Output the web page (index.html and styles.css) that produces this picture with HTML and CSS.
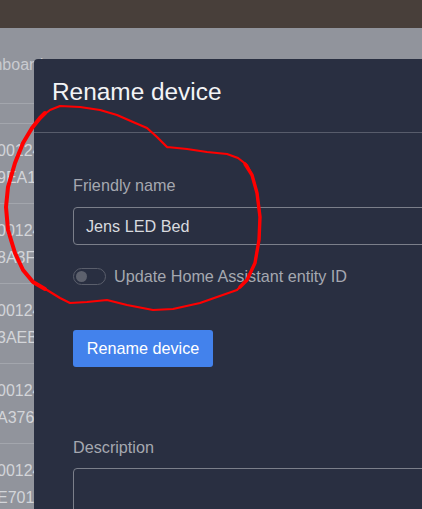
FILE: index.html
```html
<!DOCTYPE html>
<html lang="en">
<head>
<meta charset="utf-8">
<title>Rename device</title>
<link rel="stylesheet" href="styles.css">
</head>
<body>
<div class="topbar"></div>
<div class="page">
  <div class="crumb">Dashboard</div>
  <div class="table">
    <div class="thead"></div>
    <div class="row"><span>00124b0018</span><span>9EA1C2</span></div>
    <div class="row"><span>00124b0018</span><span>8A3F11</span></div>
    <div class="row"><span>00124b0018</span><span>3AEB07</span></div>
    <div class="row"><span>00124b0018</span><span>A376D4</span></div>
    <div class="row"><span>00124b0018</span><span>E701F9</span></div>
  </div>
</div>

<div class="modal">
  <div class="modal-header">
    <h1 class="modal-title">Rename device</h1>
  </div>
  <div class="modal-body">
    <label class="field-label">Friendly name</label>
    <div class="input">Jens LED Bed</div>
    <div class="toggle-row">
      <span class="toggle"><span class="knob"></span></span>
      <span class="toggle-label">Update Home Assistant entity ID</span>
    </div>
    <button class="btn">Rename device</button>
    <label class="field-label desc-label">Description</label>
    <div class="textarea"></div>
  </div>
</div>

<svg class="annotation" width="422" height="509" viewBox="0 0 422 509">
  <path class="ink" d="M167 147 L157 137 L147 128 L133 122 L117 115 L100 110 L80 107 L60 106 L50 110 L40 118 L32 128 L23 143 L15 163 L8 187 L6 207 L8 230 L15 253 L23 270 L33 282 L47 290 L60 298 L70 303 L87 302 L107 300 L127 305 L153 310 L173 309 L200 303 L217 297 L237 290 L247 280 L255 263 L259 240 L260 217 L257 193 L252 175 L247 165 L238 158 L227 154 L207 152 L187 149 L167 147"/>
  <path class="ink thick" d="M45 113 L40 118 L32 128 L23 143 L15 163 L8 187 L6 207 L8 230 L15 253 L23 270 L33 282 L45 289"/>
  <path class="ink mid" d="M245 164 L252 175 L257 193 L260 217 L259 240 L255 263 L247 280 L240 287"/>
</svg>
</body>
</html>
```

FILE: styles.css
```css
html, body {
  margin: 0;
  padding: 0;
}
body {
  width: 422px;
  height: 509px;
  overflow: hidden;
  position: relative;
  background: #91949c;
  font-family: "Liberation Sans", Arial, sans-serif;
}
.topbar {
  height: 28px;
  background: #483f3a;
}
.page {
  background: #91949c;
}
.crumb {
  font-size: 16px;
  line-height: 20px;
  color: #c9cbd0;
  margin-left: -35px;
  padding-top: 27px;
  height: 20px;
  white-space: nowrap;
}
.table {
  margin-top: 28px;
}
.thead {
  height: 19px;
  border-top: 1px solid #a3a6ad;
  border-bottom: 1px solid #a3a6ad;
}
.row {
  height: 80px;
  border-bottom: 1px solid #a3a6ad;
  display: flex;
  flex-direction: column;
  padding-top: 13px;
  box-sizing: border-box;
  font-size: 16px;
  line-height: 27px;
  color: #d3d5d9;
  margin-left: -3px;
  white-space: nowrap;
}
.modal {
  position: absolute;
  left: 34px;
  top: 59px;
  width: 520px;
  height: 600px;
  background: #292f41;
  border-radius: 4px;
}
.modal-header {
  padding: 19px 18px 26px;
  border-bottom: 1px solid #575c6b;
}
.modal-title {
  margin: 0;
  font-size: 24.4px;
  line-height: 28px;
  font-weight: normal;
  color: #f3f4f6;
}
.modal-body {
  padding: 42px 39px 0;
  display: flex;
  flex-direction: column;
  align-items: flex-start;
  font-size: 16.2px;
}
.field-label {
  font-size: 16.2px;
  line-height: 20px;
  color: #a5a8b0;
}
.input {
  margin-top: 12px;
  align-self: stretch;
  height: 36px;
  line-height: 36px;
  border: 1px solid #7b7f8a;
  border-radius: 4px;
  padding-left: 12px;
  font-size: 16.2px;
  color: #d8dadf;
}
.toggle-row {
  margin-top: 22px;
  display: flex;
  align-items: center;
  gap: 8px;
  height: 18px;
}
.toggle {
  width: 29px;
  height: 15px;
  border: 1px solid #5a5e6b;
  border-radius: 9px;
  display: flex;
  align-items: center;
  padding-left: 2px;
  box-sizing: content-box;
}
.knob {
  width: 11px;
  height: 11px;
  border-radius: 50%;
  background: #5d616d;
}
.toggle-label {
  font-size: 16.2px;
  line-height: 20px;
  color: #a5a8b0;
}
.btn {
  margin-top: 45px;
  width: 140px;
  height: 37px;
  padding: 0;
  border: none;
  border-radius: 3px;
  background: #4382ec;
  color: #ffffff;
  font-family: "Liberation Sans", Arial, sans-serif;
  font-size: 16.2px;
  line-height: 37px;
  text-align: center;
}
.desc-label {
  margin-top: 70px;
}
.textarea {
  margin-top: 11px;
  align-self: stretch;
  height: 100px;
  border: 1px solid #7b7f8a;
  border-radius: 4px;
}
.annotation {
  position: absolute;
  left: 0;
  top: 0;
  pointer-events: none;
}
.ink {
  fill: none;
  stroke: #ff0000;
  stroke-width: 2.2;
  stroke-linejoin: round;
  stroke-linecap: round;
}
.ink.thick {
  stroke-width: 4;
}
.ink.mid {
  stroke-width: 3.4;
}
```
